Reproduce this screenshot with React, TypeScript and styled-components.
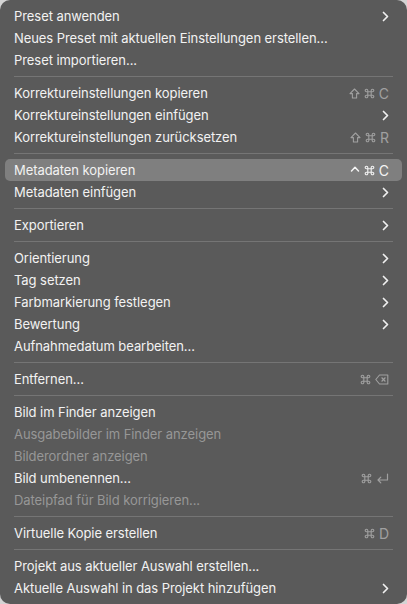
import React from "react";
import styled, { createGlobalStyle } from "styled-components";

const GlobalStyle = createGlobalStyle`
  html, body {
    margin: 0;
    padding: 0;
    background: #d4d4d4;
  }
  * {
    box-sizing: border-box;
  }
`;

type Key = "shift" | "cmd" | "ctrl" | "delete" | "return" | string;

interface MenuEntry {
  label?: string;
  keys?: Array<Key>;
  submenu?: boolean;
  disabled?: boolean;
  active?: boolean;
  separator?: boolean;
}

const entries: Array<MenuEntry> = [
  { label: "Preset anwenden", submenu: true },
  { label: "Neues Preset mit aktuellen Einstellungen erstellen..." },
  { label: "Preset importieren..." },
  { separator: true },
  { label: "Korrektureinstellungen kopieren", keys: ["shift", "cmd", "C"] },
  { label: "Korrektureinstellungen einfügen", submenu: true },
  { label: "Korrektureinstellungen zurücksetzen", keys: ["shift", "cmd", "R"] },
  { separator: true },
  { label: "Metadaten kopieren", keys: ["ctrl", "cmd", "C"], active: true },
  { label: "Metadaten einfügen", submenu: true },
  { separator: true },
  { label: "Exportieren", submenu: true },
  { separator: true },
  { label: "Orientierung", submenu: true },
  { label: "Tag setzen", submenu: true },
  { label: "Farbmarkierung festlegen", submenu: true },
  { label: "Bewertung", submenu: true },
  { label: "Aufnahmedatum bearbeiten..." },
  { separator: true },
  { label: "Entfernen...", keys: ["cmd", "delete"] },
  { separator: true },
  { label: "Bild im Finder anzeigen" },
  { label: "Ausgabebilder im Finder anzeigen", disabled: true },
  { label: "Bilderordner anzeigen", disabled: true },
  { label: "Bild umbenennen...", keys: ["cmd", "return"] },
  { label: "Dateipfad für Bild korrigieren...", disabled: true },
  { separator: true },
  { label: "Virtuelle Kopie erstellen", keys: ["cmd", "D"] },
  { separator: true },
  { label: "Projekt aus aktueller Auswahl erstellen..." },
  { label: "Aktuelle Auswahl in das Projekt hinzufügen", submenu: true },
];

const Menu = styled.div`
  width: 407px;
  height: 604px;
  padding: 5px 0;
  background: #5a5a5a;
  border-radius: 10px;
  display: flex;
  flex-direction: column;
  font-family: Inter, "Noto Sans", "Liberation Sans", sans-serif;
  font-size: 13px;
  overflow: hidden;
`;

const Item = styled.div<{ $active?: boolean; $disabled?: boolean }>`
  height: 22px;
  margin: 0 5px;
  padding: 0 13px 0 9px;
  border-radius: 5px;
  display: flex;
  align-items: center;
  justify-content: space-between;
  background: ${(p) => (p.$active ? "#7f7f7f" : "transparent")};
  color: ${(p) => (p.$disabled ? "#979797" : "#f2f2f2")};
`;

const Label = styled.span`
  white-space: nowrap;
  letter-spacing: -0.07px;
`;

const Shortcut = styled.span<{ $active?: boolean }>`
  display: flex;
  align-items: center;
  gap: 4px;
  color: ${(p) => (p.$active ? "#f4f4f4" : "#a0a0a0")};
  font-size: 14px;
`;

const Separator = styled.div`
  height: 11px;
  margin: 0 14px;
  display: flex;
  align-items: center;

  &::after {
    content: "";
    flex: 1;
    height: 1px;
    background: #757575;
  }
`;

const Glyph = styled.svg`
  display: block;
  fill: none;
  stroke: currentColor;
`;

const KeyIcon = ({ k }: { k: Key }) => {
  switch (k) {
    case "shift":
      return (
        <Glyph width="11" height="11" viewBox="0 0 11 11" strokeWidth="1.1" strokeLinejoin="round">
          <path d="M5.5 1 L10 5.6 H7.6 V10 H3.4 V5.6 H1 Z" />
        </Glyph>
      );
    case "cmd":
      return (
        <Glyph width="11" height="11" viewBox="0 0 11 11" strokeWidth="1.1">
          <path d="M3.8 3.8 H7.2 V7.2 H3.8 Z M3.8 3.8 V2.6 A1.3 1.3 0 1 0 2.6 3.8 H3.8 M7.2 3.8 V2.6 A1.3 1.3 0 1 1 8.4 3.8 H7.2 M3.8 7.2 V8.4 A1.3 1.3 0 1 1 2.6 7.2 H3.8 M7.2 7.2 V8.4 A1.3 1.3 0 1 0 8.4 7.2 H7.2" />
        </Glyph>
      );
    case "ctrl":
      return (
        <Glyph width="10" height="11" viewBox="0 0 10 11" strokeWidth="1.5" strokeLinecap="round" strokeLinejoin="round">
          <path d="M1.5 6 L5 2.2 L8.5 6" />
        </Glyph>
      );
    case "delete":
      return (
        <Glyph width="14" height="11" viewBox="0 0 14 11" strokeWidth="1.1" strokeLinejoin="round">
          <path d="M4.5 1 H12.8 V10 H4.5 L0.8 5.5 Z" />
          <path d="M6.6 3.5 L10.4 7.5 M10.4 3.5 L6.6 7.5" />
        </Glyph>
      );
    case "return":
      return (
        <Glyph width="13" height="11" viewBox="0 0 13 11" strokeWidth="1.2" strokeLinejoin="round" strokeLinecap="round">
          <path d="M11.5 1 V7 H2 M4.8 4.2 L2 7 L4.8 9.8" />
        </Glyph>
      );
    default:
      return <span>{k}</span>;
  }
};

const Chevron = () => (
  <Glyph width="7" height="11" viewBox="0 0 7 11" strokeWidth="1.7" strokeLinecap="round" strokeLinejoin="round">
    <path d="M1.5 1.5 L5.5 5.5 L1.5 9.5" />
  </Glyph>
);

const Right = styled.span`
  display: flex;
  align-items: center;
  color: #f0f0f0;
`;

export default function App() {
  return (
    <>
      <GlobalStyle />
      <Menu>
        {entries.map((entry, index) =>
          entry.separator ? (
            <Separator key={index} />
          ) : (
            <Item key={index} $active={entry.active} $disabled={entry.disabled}>
              <Label>{entry.label}</Label>
              {entry.submenu && (
                <Right>
                  <Chevron />
                </Right>
              )}
              {entry.keys && (
                <Shortcut $active={entry.active}>
                  {entry.keys.map((k, i) => (
                    <KeyIcon key={i} k={k} />
                  ))}
                </Shortcut>
              )}
            </Item>
          )
        )}
      </Menu>
    </>
  );
}
